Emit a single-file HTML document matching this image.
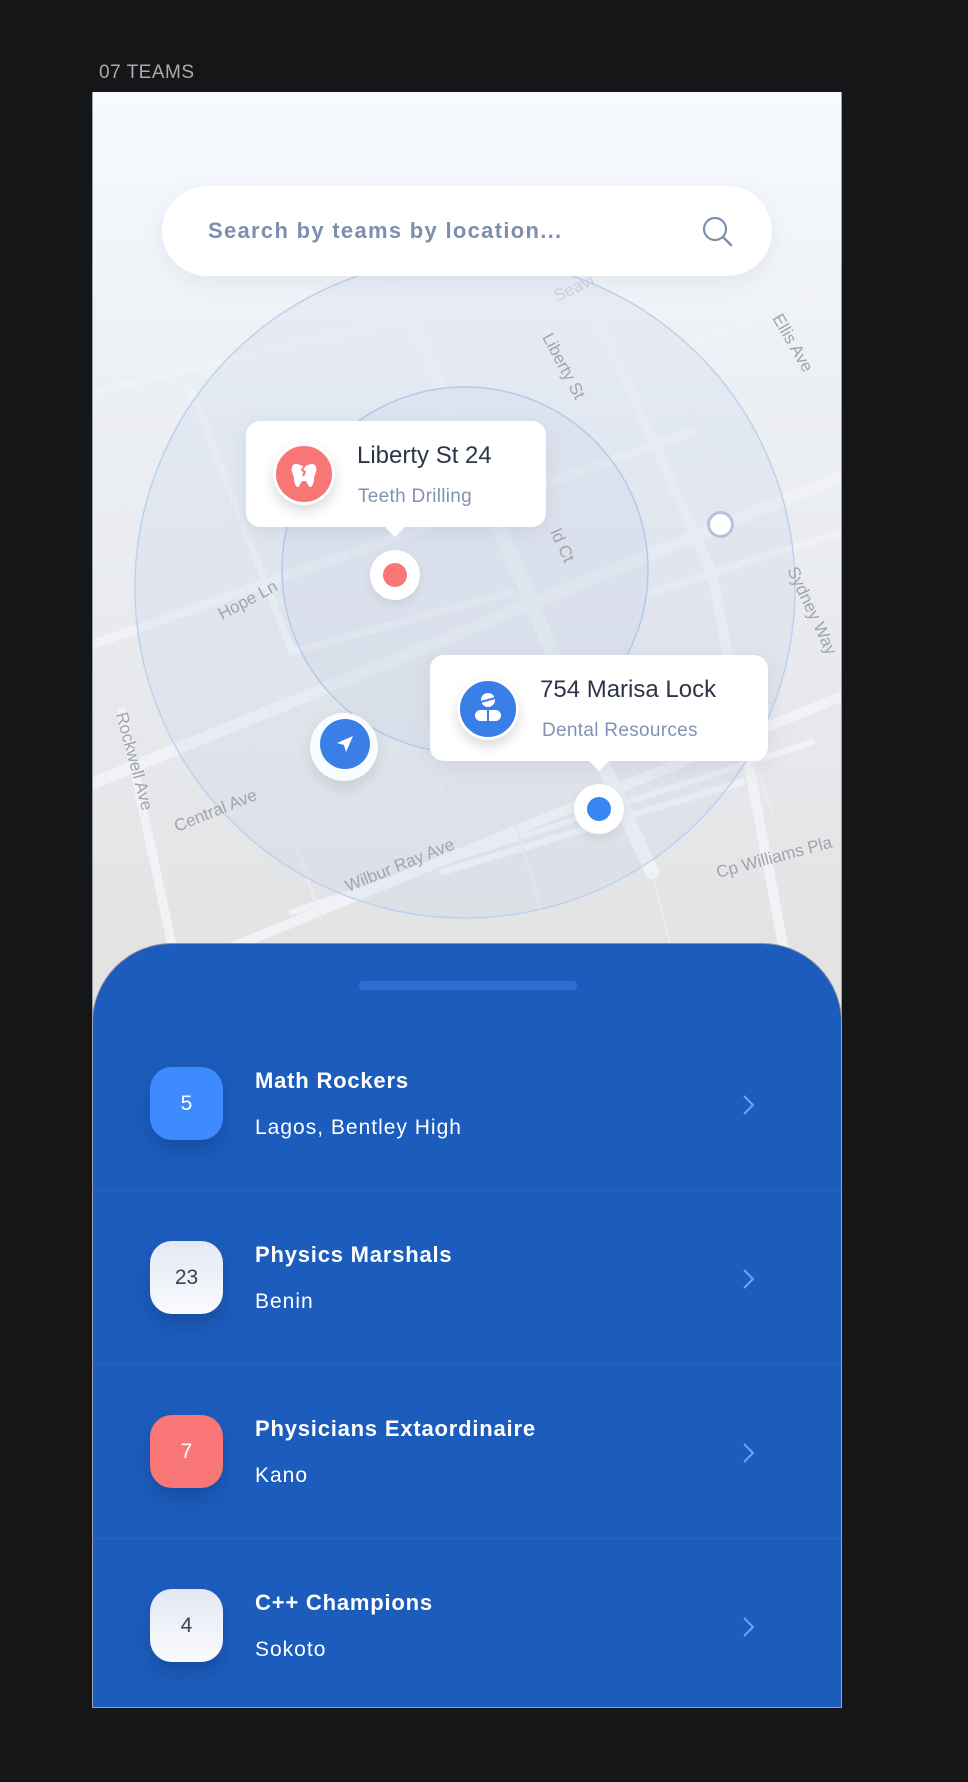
<!DOCTYPE html>
<html><head><meta charset="utf-8"><style>
*{margin:0;padding:0;box-sizing:border-box}
body{width:968px;height:1782px;background:#151618;font-family:"Liberation Sans",sans-serif;position:relative;overflow:hidden}
.lbl{position:absolute;left:99px;top:62px;color:#a9abae;font-size:19px;letter-spacing:0.5px}
.frame{position:absolute;left:92px;top:92px;width:750px;height:1616px;overflow:hidden;background:linear-gradient(#f7faff 0,#eceff4 300px,#e6e7ea 700px,#e3e3e3 860px)}
.search{position:absolute;left:70px;top:94px;width:610px;height:90px;border-radius:45px;background:#fff;box-shadow:0 6px 20px rgba(150,160,180,.15)}
.search span{position:absolute;left:46px;top:32px;font-size:22px;font-weight:bold;color:#7d8eae;letter-spacing:1.3px}
.call{position:absolute;background:#fff;border-radius:14px;box-shadow:0 6px 20px rgba(120,130,160,.15)}
.ic{position:absolute;width:62px;height:62px;border-radius:50%;border:3px solid #fff;box-shadow:0 6px 12px rgba(0,0,0,.15)}
.t{position:absolute;font-size:24px;color:#2d3548}
.s{position:absolute;font-size:19px;color:#8193b2;letter-spacing:.3px}
.dot{position:absolute;width:50px;height:50px;border-radius:50%;background:#fff;box-shadow:0 4px 10px rgba(0,0,0,.08)}
.dot i{position:absolute;left:13px;top:13px;width:24px;height:24px;border-radius:50%}
.sheet{position:absolute;left:0;top:851px;width:750px;height:800px;background:#1c5cbc;border-radius:80px 80px 0 0;border:1.5px solid #8a8f99}
.handle{position:absolute;left:266px;top:37px;width:218px;height:9px;border-radius:5px;background:#2d6fd6}
.row{position:absolute;left:0;width:750px;height:174px;border-bottom:1.5px solid #2866c6}
.badge{position:absolute;left:57px;top:50px;width:73px;height:73px;border-radius:22px;font-size:21px;text-align:center;line-height:73px;box-shadow:0 10px 16px rgba(10,40,100,.25)}
.rt{position:absolute;left:162px;top:51px;font-size:22px;font-weight:bold;color:#fff;letter-spacing:.8px}
.rs{position:absolute;left:162px;top:99px;font-size:21px;color:#fff;letter-spacing:1px}
.chev{position:absolute;left:648px;top:76px}
</style></head><body>
<div class="lbl">07 TEAMS</div>
<div class="frame">
<svg width="750" height="900" style="position:absolute;left:0;top:0">
<g stroke="#f1f2f5" fill="none" stroke-linecap="round">
<path d="M-20 700 L760 380" stroke-width="12"/>
<path d="M-20 560 L600 340" stroke-width="9"/>
<path d="M80 880 L760 600" stroke-width="10"/>
<path d="M300 180 L460 560 L560 780" stroke-width="14"/>
<path d="M480 170 L620 480 L700 900" stroke-width="10"/>
<path d="M30 620 L90 900" stroke-width="9"/>
<path d="M0 300 L300 230" stroke-width="7"/>
<path d="M100 300 L200 560 L420 500" stroke-width="7"/>
<path d="M350 780 L650 690" stroke-width="7"/>
<path d="M600 250 L740 200" stroke-width="6"/>
<path d="M200 820 L720 650" stroke-width="6"/>
<path d="M560 500 L750 440" stroke-width="7"/>
</g>
<g stroke="#eaecef" fill="none" stroke-width="2">
<path d="M120 380 L160 520 M250 430 L270 520 M330 620 L350 700 M520 560 L540 660 M600 320 L630 420 M640 600 L680 720 M200 740 L230 830 M420 720 L450 820 M560 780 L580 860"/>
</g>
<circle cx="373" cy="496" r="330" fill="rgba(190,205,235,.18)" stroke="#bcd2f0" stroke-width="1.5"/>
<circle cx="373" cy="478" r="183" fill="rgba(190,200,225,.15)" stroke="#b3c9ec" stroke-width="1.5"/>
<g fill="#a0a4ab" font-family="Liberation Sans" font-size="17">
<text transform="translate(130 528) rotate(-28)">Hope Ln</text>
<text transform="translate(85 740) rotate(-22)">Central Ave</text>
<text transform="translate(256 800) rotate(-22)">Wilbur Ray Ave</text>
<text transform="translate(626 786) rotate(-15)">Cp Williams Pla</text>
<text transform="translate(24 622) rotate(75)">Rockwell Ave</text>
<text transform="translate(695 478) rotate(65)">Sydney Way</text>
<text transform="translate(680 226) rotate(60)">Ellis Ave</text>
<text transform="translate(450 245) rotate(62)">Liberty St</text>
<text transform="translate(458 440) rotate(65)">ld Ct</text>
<text transform="translate(465 210) rotate(-25)" fill="#d0d3d8">Seavi</text>
</g>
</svg>
<div class="search"><span>Search by teams by location...</span>
<svg style="position:absolute;left:540px;top:30px" width="32" height="32" viewBox="0 0 32 32"><circle cx="13" cy="13" r="11" fill="none" stroke="#7d8eae" stroke-width="2.2"/><path d="M21 21 L29 29" stroke="#7d8eae" stroke-width="2.5" stroke-linecap="round"/></svg></div>
<div class="call" style="left:154px;top:329px;width:300px;height:106px"></div>
<div style="position:absolute;left:293px;top:435px;border-left:10px solid transparent;border-right:10px solid transparent;border-top:10px solid #fff"></div>
<div class="ic" style="left:181px;top:351px;background:#f87675"><svg width="56" height="56" viewBox="0 0 56 56"><path d="M20 18c-4 0-5 4-4 8 1 3 2 4 2 8 1 5 2 7 4 7 2 0 2-6 6-6s4 6 6 6c2 0 3-2 4-7 0-4 1-5 2-8 1-4 0-8-4-8-3 0-5 2-8 2s-5-2-8-2z" fill="#fff"/><path d="M29 19l-3 5 3 2-2 4" stroke="#f87675" stroke-width="2" fill="none"/></svg></div>
<div class="t" style="left:265px;top:350px">Liberty St 24</div>
<div class="s" style="left:266px;top:394px">Teeth Drilling</div>
<div class="dot" style="left:278px;top:458px"><i style="background:#f87675"></i></div>
<div class="call" style="left:338px;top:563px;width:338px;height:106px"></div>
<div style="position:absolute;left:497px;top:669px;border-left:10px solid transparent;border-right:10px solid transparent;border-top:10px solid #fff"></div>
<div class="ic" style="left:365px;top:586px;background:#3a7ee8"><svg width="56" height="56" viewBox="0 0 56 56"><circle cx="28" cy="19" r="7" fill="#fff"/><path d="M21 21 L35 17" stroke="#3a7ee8" stroke-width="2"/><rect x="15" y="29" width="26" height="11" rx="5.5" fill="#fff"/><path d="M28 29v11" stroke="#3a7ee8" stroke-width="2"/></svg></div>
<div class="t" style="left:448px;top:584px">754 Marisa Lock</div>
<div class="s" style="left:450px;top:628px">Dental Resources</div>
<div class="dot" style="left:482px;top:692px"><i style="background:#3a86f5"></i></div>
<div style="position:absolute;left:218px;top:621px;width:68px;height:68px;border-radius:50%;background:rgba(255,255,255,.85);box-shadow:0 6px 14px rgba(0,0,0,.1)"></div>
<div style="position:absolute;left:228px;top:627px;width:50px;height:50px;border-radius:50%;background:#3a7ee8"><svg width="50" height="50" viewBox="0 0 50 50"><path d="M33 17 L17 24 L24 26 L26 33 Z" fill="#fff"/></svg></div>
<div style="position:absolute;left:615px;top:419px;width:27px;height:27px;border-radius:50%;background:#fff;border:3px solid #b4c2dc"></div>
<div class="sheet">
<div class="handle"></div>
<div class="row" style="top:73px"><div class="badge" style="background:#3d8bfd;color:#fff">5</div><div class="rt">Math Rockers</div><div class="rs">Lagos, Bentley High</div><svg class="chev" width="16" height="24"><path d="M3 3 L12 12 L3 21" stroke="#6ea3f5" stroke-width="2" fill="none"/></svg></div>
<div class="row" style="top:247px"><div class="badge" style="background:linear-gradient(#e3e8f4,#fafbfe);color:#3a4256">23</div><div class="rt">Physics Marshals</div><div class="rs">Benin</div><svg class="chev" width="16" height="24"><path d="M3 3 L12 12 L3 21" stroke="#6ea3f5" stroke-width="2" fill="none"/></svg></div>
<div class="row" style="top:421px"><div class="badge" style="background:#f87675;color:#fff">7</div><div class="rt">Physicians Extaordinaire</div><div class="rs">Kano</div><svg class="chev" width="16" height="24"><path d="M3 3 L12 12 L3 21" stroke="#6ea3f5" stroke-width="2" fill="none"/></svg></div>
<div class="row" style="top:595px;border-bottom:none"><div class="badge" style="background:linear-gradient(#e3e8f4,#fafbfe);color:#3a4256">4</div><div class="rt">C++ Champions</div><div class="rs">Sokoto</div><svg class="chev" width="16" height="24"><path d="M3 3 L12 12 L3 21" stroke="#6ea3f5" stroke-width="2" fill="none"/></svg></div>
</div>
</div>
<div style="position:absolute;left:92px;top:92px;width:750px;height:1616px;border:1px solid #9aa0aa;border-top:none;pointer-events:none"></div>
</body></html>
